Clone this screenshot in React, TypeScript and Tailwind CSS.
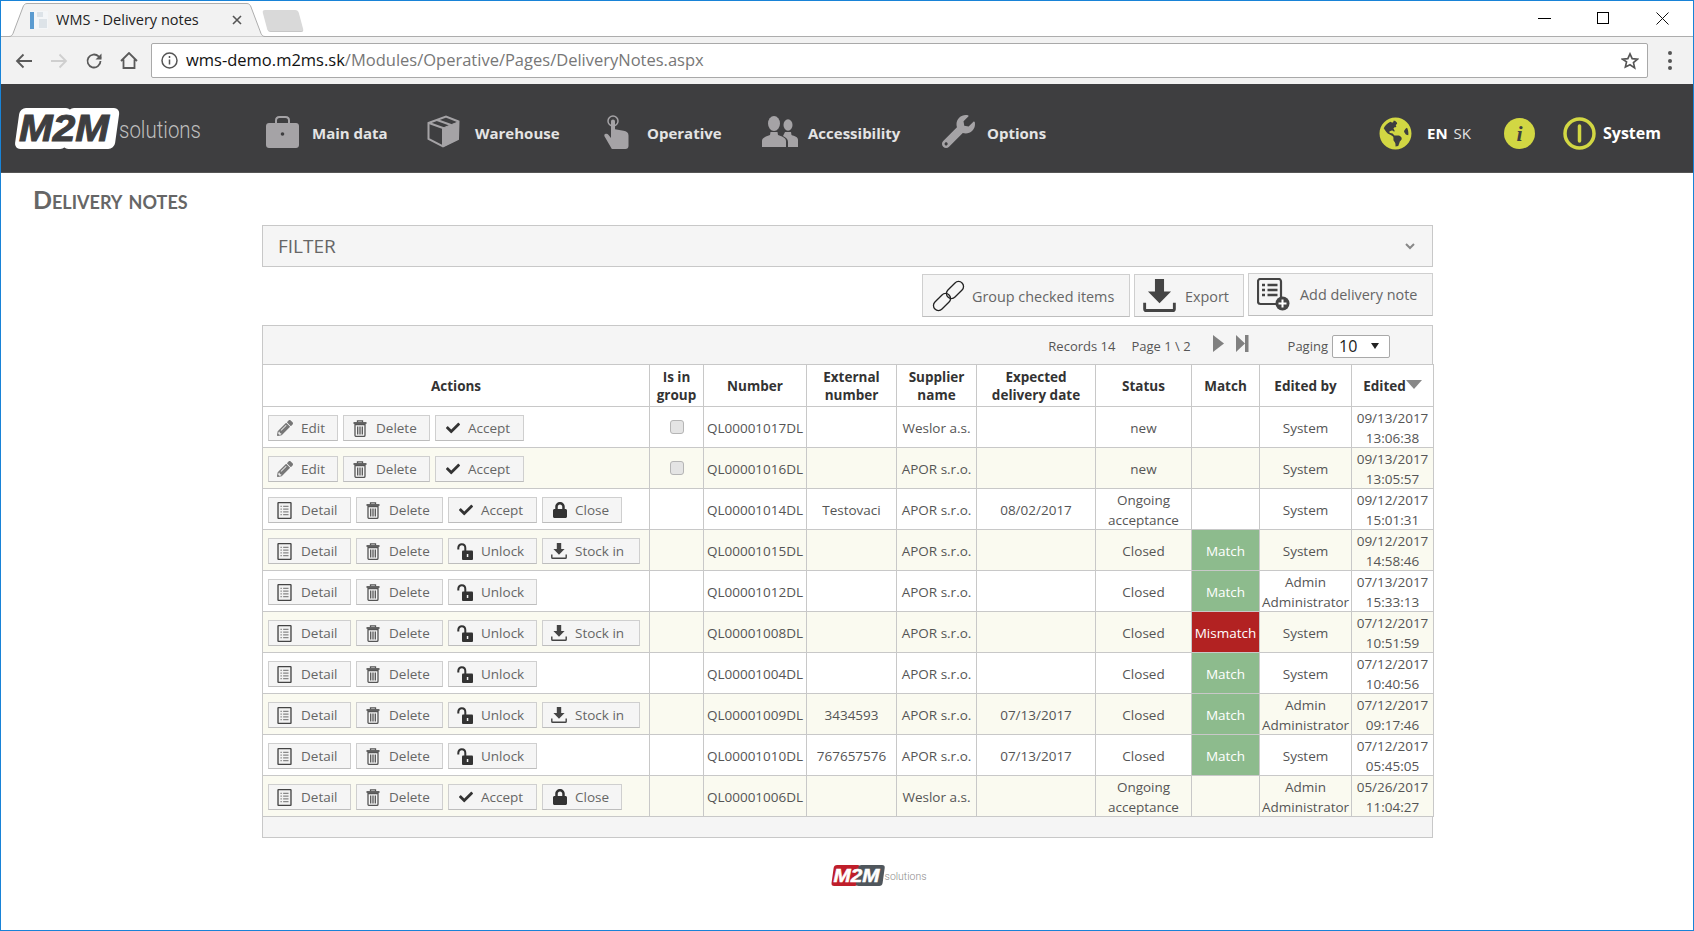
import { FaCheck, FaGlobeAmericas, FaLock, FaPencilAlt, FaWrench } from 'react-icons/fa';

type ActionKind = 'edit' | 'delete' | 'accept' | 'detail' | 'close' | 'unlock' | 'stock';

interface Row {
  actions: ActionKind[];
  check?: boolean;
  number: string;
  external?: string;
  supplier: string;
  date?: string;
  status: string;
  match?: 'Match' | 'Mismatch';
  by: string;
  edited: string;
  time: string;
}

const newActions: ActionKind[] = ['edit', 'delete', 'accept'];
const openActions: ActionKind[] = ['detail', 'delete', 'accept', 'close'];
const stockActions: ActionKind[] = ['detail', 'delete', 'unlock', 'stock'];
const closedActions: ActionKind[] = ['detail', 'delete', 'unlock'];
const ongoing = 'Ongoing acceptance';
const admin = 'Admin Administrator';

const rows: Row[] = [
  { actions: newActions, check: true, number: 'QL00001017DL', supplier: 'Weslor a.s.', status: 'new', by: 'System', edited: '09/13/2017', time: '13:06:38' },
  { actions: newActions, check: true, number: 'QL00001016DL', supplier: 'APOR s.r.o.', status: 'new', by: 'System', edited: '09/13/2017', time: '13:05:57' },
  { actions: openActions, number: 'QL00001014DL', external: 'Testovaci', supplier: 'APOR s.r.o.', date: '08/02/2017', status: ongoing, by: 'System', edited: '09/12/2017', time: '15:01:31' },
  { actions: stockActions, number: 'QL00001015DL', supplier: 'APOR s.r.o.', status: 'Closed', match: 'Match', by: 'System', edited: '09/12/2017', time: '14:58:46' },
  { actions: closedActions, number: 'QL00001012DL', supplier: 'APOR s.r.o.', status: 'Closed', match: 'Match', by: admin, edited: '07/13/2017', time: '15:33:13' },
  { actions: stockActions, number: 'QL00001008DL', supplier: 'APOR s.r.o.', status: 'Closed', match: 'Mismatch', by: 'System', edited: '07/12/2017', time: '10:51:59' },
  { actions: closedActions, number: 'QL00001004DL', supplier: 'APOR s.r.o.', status: 'Closed', match: 'Match', by: 'System', edited: '07/12/2017', time: '10:40:56' },
  { actions: stockActions, number: 'QL00001009DL', external: '3434593', supplier: 'APOR s.r.o.', date: '07/13/2017', status: 'Closed', match: 'Match', by: admin, edited: '07/12/2017', time: '09:17:46' },
  { actions: closedActions, number: 'QL00001010DL', external: '767657576', supplier: 'APOR s.r.o.', date: '07/13/2017', status: 'Closed', match: 'Match', by: 'System', edited: '07/12/2017', time: '05:45:05' },
  { actions: openActions, number: 'QL00001006DL', supplier: 'Weslor a.s.', status: ongoing, by: admin, edited: '05/26/2017', time: '11:04:27' },
];

function TrashIcon() {
  return (
    <svg className="ml-px" width="14" height="17" viewBox="0 0 14 17" fill="none" stroke="#555" strokeWidth="1.300">
      <path d="M4.500 2.200V.8h5v1.400" />
      <path d="M.5 3h13" strokeWidth="1.800" />
      <path d="M2 4.500h10v10.800c0 .7-.4 1.100-1.100 1.100H3.100c-.7 0-1.100-.4-1.100-1.100z" />
      <path d="M4.700 6.500v8M7 6.500v8M9.300 6.500v8" />
    </svg>
  );
}

function DetailIcon() {
  return (
    <svg width="15" height="17" viewBox="0 0 16 19" fill="none">
      <rect x="0.75" y="0.75" width="14.5" height="17.5" rx="0.5" fill="#f2f2f2" stroke="#444" strokeWidth="1.500" />
      <path d="M3.500 5h1.500M3.500 8h1.500M3.500 11h1.500M3.500 14h1.500M6.500 5h6M6.500 8h6M6.500 11h6M6.500 14h6" stroke="#888" strokeWidth="1.400" />
    </svg>
  );
}

function UnlockIcon() {
  return (
    <svg width="16" height="17" viewBox="0 0 16 17" fill="none">
      <path d="M1.300 6.500V5c0-2.200 1.500-3.800 3.500-3.800S8.300 2.800 8.300 5v3" stroke="#333" strokeWidth="2" />
      <rect x="5" y="7.500" width="11" height="9.500" rx="1" fill="#333" />
      <rect x="9.800" y="11" width="1.500" height="3" fill="#f5f5f5" />
    </svg>
  );
}

function DownloadIcon({ size = 16 }: { size?: number }) {
  return (
    <svg width={size} height={size} viewBox="0 0 16 16" fill="none">
      <path d="M5.800 0h4.400v6h3.400L8 11.800 2.400 6h3.400z" fill="#444" />
      <path d="M.8 11.500v3c0 .5.3.8.8.8h12.800c.5 0 .8-.3.8-.8v-3" stroke="#444" strokeWidth="1.400" />
    </svg>
  );
}

const actionConfig: Record<ActionKind, { label: string; width: string; icon: React.ReactNode }> = {
  edit: { label: 'Edit', width: 'w-[70px]', icon: <FaPencilAlt size={16} color="#777" /> },
  delete: { label: 'Delete', width: 'w-[87px]', icon: <TrashIcon /> },
  accept: { label: 'Accept', width: 'w-[89px]', icon: <FaCheck className="ml-[2px]" size={14} color="#333" /> },
  detail: { label: 'Detail', width: 'w-[83px]', icon: <DetailIcon /> },
  close: { label: 'Close', width: 'w-[80px]', icon: <FaLock className="ml-px" size={16} color="#333" /> },
  unlock: { label: 'Unlock', width: 'w-[89px]', icon: <UnlockIcon /> },
  stock: { label: 'Stock in', width: 'w-[98px]', icon: <DownloadIcon /> },
};

function ActionButton({ kind }: { kind: ActionKind }) {
  const action = actionConfig[kind];
  return (
    <button className={`flex h-[26px] shrink-0 items-center border border-[#cfcfcf] border-b-[#bdbdbd] bg-[#f5f5f5] pl-[8px] text-[13.500px] text-[#666] ${action.width}`}>
      <span className="flex w-[24px] shrink-0 items-center">{action.icon}</span>
      {action.label}
    </button>
  );
}

function Logo({ footer }: { footer?: boolean }) {
  const left = footer ? '#bf1e2a' : '#ffffff';
  const right = footer ? '#4f565c' : '#ffffff';
  const ink = footer ? '#ffffff' : '#3e3e40';
  const tail = footer ? '#8b8b8b' : '#bdbdbd';
  return (
    <svg viewBox="0 0 188 41" className={footer ? 'h-[21px] w-[96px] overflow-visible' : 'h-[41px] w-[188px] overflow-visible'}>
      <rect x="6" y="0" width="52" height="41" rx="6" fill={left} transform="skewX(-8)" />
      <rect x="54" y="0" width="52" height="41" rx="6" fill={right} transform="skewX(-8)" />
      <text x="50" y="33" textAnchor="middle" fontFamily="'Liberation Sans', sans-serif" fontSize="36" fontWeight="700" fontStyle="italic" textLength="90" lengthAdjust="spacingAndGlyphs" stroke={ink} strokeWidth="1" fill={ink}>
        M2M
      </text>
      <text x="105" y="30" fontFamily="Roboto, sans-serif" fontSize="23" fontWeight="300" textLength="82" lengthAdjust="spacingAndGlyphs" fill={tail}>
        solutions
      </text>
    </svg>
  );
}

function BriefcaseIcon() {
  return (
    <svg width="33" height="32" viewBox="0 0 33 32">
      <path d="M10 8V4.500C10 2.500 11.500 1 13.500 1h6C21.500 1 23 2.500 23 4.500V8" fill="none" stroke="#a5a3a6" strokeWidth="2" />
      <path d="M3 7h27c1.700 0 3 1.300 3 3v19c0 1.700-1.300 3-3 3H3c-1.700 0-3-1.300-3-3V10c0-1.700 1.300-3 3-3z" fill="#a5a3a6" />
      <circle cx="16.500" cy="18" r="1.800" fill="#3e3e40" />
    </svg>
  );
}

function BoxIcon() {
  return (
    <svg width="33" height="33" viewBox="0 0 33 33" fill="none" stroke="#a5a3a6">
      <path d="M1.500 8 19 1.500l12.500 5L31 24 16 31.500 1.500 24z" strokeWidth="2" />
      <path d="M16 12v19" strokeWidth="2" />
      <path d="M16 13 31 7v17l-15 7.500z" fill="#a5a3a6" strokeWidth="1" />
      <path d="M2 8l14 5M10 5l14 5" strokeWidth="2" />
    </svg>
  );
}

function HandIcon() {
  return (
    <svg width="25" height="34" viewBox="0 0 25 34" fill="#a5a3a6">
      <circle cx="9" cy="6" r="5" fill="none" stroke="#a5a3a6" strokeWidth="1.500" />
      <path d="M7 6.500c0-1.200.8-2 2-2s2 .8 2 2v7.800l8.500 1.500c3 .6 5 1.700 5 4.700V31c0 1.700-1.300 3-3 3H9c-1 0-1.700-.5-2-1.500L.6 21.500c-.7-1.500 0-2.500 1.200-2.700 1-.2 2 .2 2.800 1.200L7 23z" />
    </svg>
  );
}

function PeopleIcon() {
  return (
    <svg width="36" height="31" viewBox="0 0 36 31" fill="#a5a3a6">
      <ellipse cx="26" cy="9" rx="4.500" ry="5.800" />
      <path d="M23 16h6l.5 3c3 1 6.500 2 6.500 5v7H26v-5c0-3-2-4.500-5-6z" />
      <ellipse cx="12" cy="7.500" rx="6" ry="7.500" />
      <path d="M8.500 16h7l.5 3c3.500 1.200 8 2.500 8 6v6H0v-6c0-3.500 4.500-4.800 8-6z" />
    </svg>
  );
}

function PowerIcon() {
  return (
    <svg width="33" height="33" viewBox="0 0 33 33" fill="none" stroke="#d2d743">
      <circle cx="16.500" cy="16.500" r="14.500" strokeWidth="3.500" />
      <path d="M16.500 9v15" strokeWidth="3.500" strokeLinecap="round" />
    </svg>
  );
}

function BrowserChrome() {
  return (
    <>
      <div className="flex h-[36px] shrink-0 items-end border-b border-[#adadad] bg-white">
        <div className="relative -mb-px ml-[6px] flex h-[34px] w-[260px] items-center pl-[22px]">
          <svg className="absolute inset-0" width="260" height="34" viewBox="0 0 260 34">
            <path d="M0 33.500h2c2 0 3-1 4-3L16 4c.7-2 2-3.500 4-3.500h220c2 0 3.300 1.500 4 3.500l10 26.500c1 2 2 3 4 3h2" fill="#f2f2f2" stroke="#adadad" />
          </svg>
          <svg className="relative" width="20" height="20" viewBox="0 0 20 20">
            <rect x="1" y="1" width="18" height="18" fill="#f4f6f8" />
            <rect x="1" y="2" width="4" height="17" fill="#5b9bd0" />
            <path d="M8 2h6v5H8zM10 9h8v9h-8z" fill="#dde3e8" />
          </svg>
          <span className="relative ml-[7px] w-[176px] whitespace-nowrap text-[14.500px] text-[#222]">WMS - Delivery notes</span>
          <svg className="relative" width="10" height="10" viewBox="0 0 10 10" stroke="#555" strokeWidth="1.600">
            <path d="M1 1l8 8M9 1l-8 8" />
          </svg>
        </div>
        <div className="mb-[4px] ml-[-2px] h-[22px] w-[36px] skew-x-[15deg] rounded-[3px] border-b border-[#c6c6c6] bg-[#d9d9d9]" />
        <div className="flex-1" />
        <div className="mb-[11px] flex h-[14px] items-center">
          <div className="h-px w-[13px] bg-black" />
          <div className="ml-[46px] h-[12px] w-[12px] border border-black" />
          <svg className="ml-[47px] mr-[24px]" width="13" height="13" viewBox="0 0 13 13" stroke="#111" strokeWidth="1">
            <path d="M.5.5l12 12M12.500.5l-12 12" />
          </svg>
        </div>
      </div>
      <div className="flex h-[47px] shrink-0 items-center bg-[#f2f2f2]">
        <svg className="ml-[14px]" width="18" height="16" viewBox="0 0 18 16" fill="none" stroke="#5a5a5a" strokeWidth="1.800">
          <path d="M17 8H2M8.500 1.500 2 8l6.500 6.500" />
        </svg>
        <svg className="ml-[17px]" width="18" height="16" viewBox="0 0 18 16" fill="none" stroke="#cfcfcf" strokeWidth="1.800">
          <path d="M1 8h15M9.500 1.500 16 8l-6.500 6.500" />
        </svg>
        <svg className="ml-[17px]" width="18" height="18" viewBox="0 0 18 18" fill="none" stroke="#5a5a5a" strokeWidth="1.800">
          <path d="M15.500 9A6.500 6.500 0 1 1 13.600 4.400L16 6.500" />
          <path d="M16.500 1.500v6h-6" fill="#5a5a5a" stroke="none" />
        </svg>
        <svg className="ml-[17px]" width="18" height="17" viewBox="0 0 18 17" fill="none" stroke="#5a5a5a" strokeWidth="1.800">
          <path d="M1 9l8-8 8 8M3.500 7.500V16h11V7.500" />
        </svg>
        <div className="ml-[13px] flex h-[35px] w-[1497px] items-center rounded-[2px] border border-[#a9a9a9] bg-white pl-[9px]">
          <svg width="17" height="17" viewBox="0 0 17 17" fill="none" stroke="#555" strokeWidth="1.500">
            <circle cx="8.500" cy="8.500" r="7.500" />
            <path d="M8.500 7.500v5M8.500 4v2" />
          </svg>
          <span className="ml-[8px] whitespace-nowrap text-[16.500px] text-[#111]">
            wms-demo.m2ms.sk<span className="text-[#777]">/Modules/Operative/Pages/DeliveryNotes.aspx</span>
          </span>
          <div className="flex-1" />
          <svg className="mr-[8px]" width="18" height="18" viewBox="0 0 24 24" fill="none" stroke="#555" strokeWidth="2.200">
            <path d="M12 2.500l2.900 6.400 7 .7-5.300 4.600 1.600 6.900L12 17l-6.200 3.100 1.600-6.900L2.100 9.600l7-.7z" />
          </svg>
        </div>
        <div className="ml-[20px] flex flex-col gap-[3.500px]">
          <div className="h-[4px] w-[4px] rounded-full bg-[#555]" />
          <div className="h-[4px] w-[4px] rounded-full bg-[#555]" />
          <div className="h-[4px] w-[4px] rounded-full bg-[#555]" />
        </div>
      </div>
    </>
  );
}

function NavItem({ icon, label, width, iconWidth }: { icon: React.ReactNode; label: string; width: string; iconWidth: string }) {
  return (
    <div className={`mt-[7px] flex shrink-0 items-center ${width}`}>
      <div className={`flex shrink-0 items-center ${iconWidth}`}>{icon}</div>
      <span className="mt-[3px] text-[15px] font-bold text-[#e4e4e4]">{label}</span>
    </div>
  );
}

function NavBar() {
  return (
    <div className="flex h-[89px] shrink-0 items-center border-b border-[#555] bg-[#3e3e40] pl-[13px]">
      <div className="w-[252px] shrink-0">
        <Logo />
      </div>
      <NavItem icon={<BriefcaseIcon />} label="Main data" width="w-[161px]" iconWidth="w-[46px]" />
      <NavItem icon={<BoxIcon />} label="Warehouse" width="w-[177px]" iconWidth="w-[48px]" />
      <NavItem icon={<HandIcon />} label="Operative" width="w-[158px]" iconWidth="w-[43px]" />
      <NavItem icon={<PeopleIcon />} label="Accessibility" width="w-[180px]" iconWidth="w-[46px]" />
      <NavItem icon={<FaWrench size={33} color="#a5a3a6" />} label="Options" width="w-[437px]" iconWidth="w-[45px]" />
      <div className="mt-[10px] flex w-[107px] shrink-0 items-center">
        <FaGlobeAmericas size={33} color="#d2d743" />
        <span className="ml-[15px] text-[15px] font-bold text-white">EN</span>
        <span className="ml-[6px] text-[15px] text-[#e4e4e4]">SK</span>
      </div>
      <div className="ml-[18px] mt-[10px] flex h-[31px] w-[31px] shrink-0 items-center justify-center rounded-full bg-[#d2d743] text-[22px] font-bold italic text-[#3e3e40] [font-family:'Liberation_Serif',serif]">
        i
      </div>
      <div className="ml-[28px] mt-[10px] shrink-0">
        <PowerIcon />
      </div>
      <span className="ml-[7px] mt-[10px] text-[16px] font-bold text-white">System</span>
    </div>
  );
}

function ToolButton({ icon, label, className }: { icon: React.ReactNode; label: string; className: string }) {
  return (
    <button className={`flex items-center border border-[#cfcfcf] border-b-[#bdbdbd] bg-[#f5f5f5] text-[14.400px] text-[#666] ${className}`}>
      {icon}
      {label}
    </button>
  );
}

const headClass = 'border border-[#c8c8c8] px-[2px] text-center text-[13.500px] leading-[18px] font-bold text-[#333]';
const cellClass = 'border border-[#c8c8c8] px-[2px] text-center leading-[20px]';

function Cell({ children, className = '' }: { children?: React.ReactNode; className?: string }) {
  return (
    <td className={`${cellClass} ${className}`}>
      <div className="mt-[1px] -mb-[1px]">{children}</div>
    </td>
  );
}

function DataRow({ row, index }: { row: Row; index: number }) {
  const rowBg = index % 2 === 1 ? 'bg-[#fafaf0]' : 'bg-white';
  const matchBg = row.match === 'Match' ? 'bg-[#8dbb8d] text-white' : row.match === 'Mismatch' ? 'bg-[#b22222] text-white' : '';
  return (
    <tr className={`h-[41px] ${rowBg}`}>
      <td className="border border-[#c8c8c8] pl-[5px]">
        <div className="mt-[1px] -mb-[1px] flex gap-[5px]">
          {row.actions.map((kind) => (
            <ActionButton key={kind} kind={kind} />
          ))}
        </div>
      </td>
      <td className={cellClass}>
        {row.check && <input type="checkbox" readOnly className="ml-[18px] block h-[14px] w-[14px] appearance-none rounded-[3px] border border-[#b5b5b5] bg-[#e4e4e4]" />}
      </td>
      <Cell className="whitespace-nowrap">{row.number}</Cell>
      <Cell>{row.external}</Cell>
      <Cell className="whitespace-nowrap">{row.supplier}</Cell>
      <Cell>{row.date}</Cell>
      <Cell>{row.status}</Cell>
      <Cell className={matchBg}>{row.match}</Cell>
      <Cell>{row.by}</Cell>
      <Cell>
        {row.edited}
        <br />
        {row.time}
      </Cell>
    </tr>
  );
}

export default function App() {
  return (
    <div className="flex h-[931px] w-[1694px] flex-col overflow-hidden border border-[#1883d7] bg-white text-[13.500px] text-[#555] [font-family:'Open_Sans',sans-serif]">
      <BrowserChrome />
      <NavBar />
      <h1 className="h-[52px] shrink-0 pl-[32px] pt-[11px] text-[25px] leading-[30px] font-bold text-[#666] [font-family:Lato,sans-serif] [font-variant-caps:small-caps]">
        Delivery notes
      </h1>
      <div className="ml-[261px] w-[1171px]">
        <div className="flex h-[42px] items-center justify-between border border-[#c8c8c8] bg-[#f5f5f5] pl-[15px] pr-[17px]">
          <span className="text-[19px] font-medium text-[#666]">FILTER</span>
          <svg width="10" height="7" viewBox="0 0 10 7" fill="none" stroke="#888" strokeWidth="2">
            <path d="M1 1l4 4 4-4" />
          </svg>
        </div>
        <div className="mt-[6px] flex h-[45px] justify-end gap-[4px]">
          <ToolButton
            className="mt-px h-[43px] w-[208px] pl-[9px] pt-[2px]"
            label="Group checked items"
            icon={
              <svg className="mr-[7px] -mt-[2px]" width="33" height="34" viewBox="0 0 33 34" fill="none" stroke="#222" strokeWidth="1.300">
                <rect x="13" y="6" width="20" height="10" rx="5" transform="rotate(-45 23 11)" />
                <rect x="0" y="18" width="20" height="10" rx="5" transform="rotate(-45 10 23)" />
              </svg>
            }
          />
          <ToolButton
            className="mt-px h-[43px] w-[110px] pl-[8px] pt-[2px]"
            label="Export"
            icon={
              <span className="mr-[9px] -mt-[2px]">
                <DownloadIcon size={33} />
              </span>
            }
          />
          <ToolButton
            className="h-[43px] w-[185px] pl-[8px]"
            label="Add delivery note"
            icon={
              <svg className="mr-[10px]" width="33" height="33" viewBox="0 0 33 33" fill="none">
                <path d="M24 21V3.500C24 2 23 1 21.500 1h-18C2 1 1 2 1 3.500v20C1 25 2 26 3.500 26H19" stroke="#444" strokeWidth="2.200" />
                <path d="M5 7h3M5 12h3M5 17h3M10.500 7h10M10.500 12h10M10.500 17h10" stroke="#444" strokeWidth="2.600" />
                <circle cx="25.500" cy="25.500" r="7" fill="#444" />
                <path d="M25.500 21.500v8M21.500 25.500h8" stroke="#fff" strokeWidth="2" />
              </svg>
            }
          />
        </div>
        <div className="mt-[7px] border border-[#c8c8c8] bg-[#f5f5f5]">
          <div className="flex h-[38px] items-center justify-end pr-[42px] text-[13px]">
            <span className="mt-[3px]">Records 14</span>
            <span className="ml-[16px] mt-[3px]">Page 1 \ 2</span>
            <svg className="ml-[21px] -mt-[3px]" width="13" height="19" viewBox="0 0 13 19" fill="#808080">
              <path d="M1 1l11 8.500L1 18z" />
            </svg>
            <svg className="ml-[10px] -mt-[3px]" width="14" height="19" viewBox="0 0 14 19" fill="#808080">
              <path d="M1 1l9 8.500L1 18zM10 1h3.500v17H10z" />
            </svg>
            <span className="ml-[39px] mt-[3px]">Paging</span>
            <div className="ml-[4px] mt-[2px] flex h-[23px] w-[58px] items-center justify-between rounded-[2px] border border-[#a9a9a9] bg-white pl-[6px] pr-[10px] text-[16px] text-[#222]">
              10
              <span className="h-0 w-0 border-x-[4px] border-t-[6px] border-x-transparent border-t-[#222]" />
            </div>
          </div>
          <table className="-mx-px w-[1171px] table-fixed border-collapse">
            <colgroup>
              <col className="w-[387px]" />
              <col className="w-[54px]" />
              <col className="w-[103px]" />
              <col className="w-[90px]" />
              <col className="w-[80px]" />
              <col className="w-[119px]" />
              <col className="w-[96px]" />
              <col className="w-[68px]" />
              <col className="w-[92px]" />
              <col className="w-[82px]" />
            </colgroup>
            <thead>
              <tr className="h-[42px] bg-white">
                <th className={headClass}>Actions</th>
                <th className={headClass}>Is in group</th>
                <th className={headClass}>Number</th>
                <th className={headClass}>External number</th>
                <th className={headClass}>Supplier name</th>
                <th className={headClass}>
                  Expected
                  <br />
                  delivery date
                </th>
                <th className={headClass}>Status</th>
                <th className={headClass}>Match</th>
                <th className={headClass}>Edited by</th>
                <th className={headClass}>
                  <span className="flex items-center justify-center">
                    Edited
                    <span className="mb-[2px] h-0 w-0 border-x-[8px] border-t-[9px] border-x-transparent border-t-[#888]" />
                  </span>
                </th>
              </tr>
            </thead>
            <tbody>
              {rows.map((row, index) => (
                <DataRow key={row.number} row={row} index={index} />
              ))}
            </tbody>
          </table>
          <div className="h-[20px]" />
        </div>
        <div className="ml-[569px] mt-[27px]">
          <Logo footer />
        </div>
      </div>
    </div>
  );
}
